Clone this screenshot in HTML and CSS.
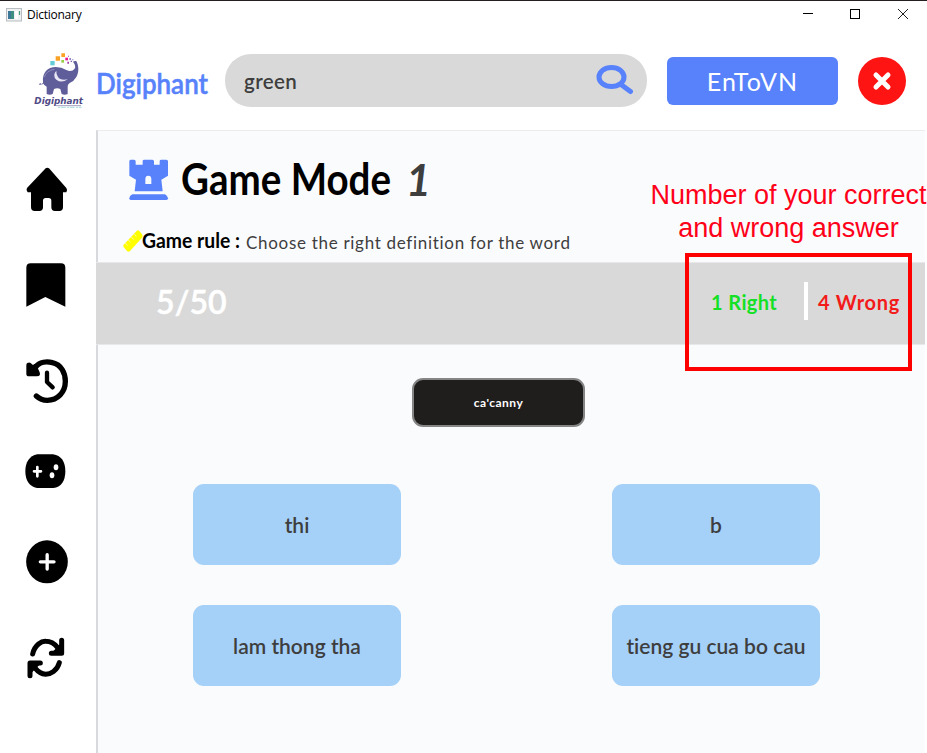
FILE: index.html
```html
<!DOCTYPE html>
<html lang="en">
<head>
<meta charset="utf-8">
<title>Dictionary</title>
<link rel="stylesheet" href="styles.css">
</head>
<body>
<div class="window">
  <div class="titlebar">
    <svg class="app-icon" width="16" height="14" viewBox="0 0 16 14"><rect x=".5" y=".5" width="15" height="12.500" fill="#f0f1f2" stroke="#b9bcc0"/><rect x="2" y="3" width="6" height="8" fill="#3f8f80"/><path d="M2 3h3v8H2z" fill="#3e7898"/><rect x="9" y="3" width="3" height="8" fill="#fff"/><path d="M13.500 3v4" stroke="#4c9c7d" stroke-width="1.200"/></svg>
    <span class="title">Dictionary</span>
    <svg class="controls" width="106" height="12" viewBox="0 0 106 12"><path d="M0 5.500h10" stroke="#000"/><rect x="47.500" y="1.500" width="9" height="9" fill="none" stroke="#000"/><path d="M95 1l10 10M105 1L95 11" stroke="#222" stroke-width="1"/></svg>
  </div>

  <header class="header">
    <svg class="logo" width="52" height="58" viewBox="98 156 156 174">
      <path d="M117 251q4-3 8 3q4-1 3-8C125 218 142 201 166 201q18 0 32 9q16 8 25-4q5-8-5-21q3-3 10-2c8 16 8 34 0 48q-7 13-20 18q-7 4-6 12v21q-9 4-18 0l-4-15q-9-4-19 0l-4 15q-9 4-18 0v-22q-8-5-12-11q-4 6-8 5q-4 2-2-3z" fill="#5f5e9b"/>
      <path d="M168 212q-13 14 0 27q16 12 34-1q-22 4-29-7q-6-10-5-19z" fill="#e9e7f5"/>
      <path d="M132 231q7-20 30-23" fill="none" stroke="#a19fc7" stroke-width="2"/>
      <path d="M150 183h13v13h-13z" fill="#64ccd6"/><path d="M166 169h13v13h-13zM183 160h11v11h-11z" fill="#faa225"/><path d="M183 180h8v8h-8z" fill="#98cd43"/><path d="M195 173h8v8h-8z" fill="#ec168c"/><path d="M201 185h5v6h-5zM203 167h3v3h-3z" fill="#a33da0"/><path d="M207 175h5v4h-5zM211 182h4v4h-4zM216 178h3v3h-3z" fill="#6b5ca5"/>
      <text class="logo-word" x="102" y="311" textLength="146" lengthAdjust="spacingAndGlyphs">Digiphant</text>
      <path d="M166 317h76" stroke="#77709f" stroke-width="2"/><path d="M173 322h71" stroke="#a8dce0" stroke-width="3" stroke-dasharray="7 2 14 4"/>
    </svg>
    <svg class="brand" width="114" height="44"><text class="brand-word" x="0" y="28" textLength="112" lengthAdjust="spacingAndGlyphs">Digiphant</text></svg>
    <div class="search">
      <span class="query">green</span>
      <svg width="38" height="30" viewBox="0 0 38 30"><ellipse cx="15.500" cy="12" rx="12.500" ry="9.600" fill="none" stroke="#5782fb" stroke-width="5"/><path d="M25 19.500l9.500 7" stroke="#5782fb" stroke-width="5" stroke-linecap="round"/></svg>
    </div>
    <div class="lang">EnToVN</div>
    <div class="close"><svg width="18" height="18" viewBox="0 0 18 18"><path d="M3 3l12 12M15 3L3 15" stroke="#fff" stroke-width="5" stroke-linecap="round"/></svg></div>
  </header>

  <div class="body">
    <nav class="sidebar">
      <svg class="home" width="42" height="45" viewBox="78 110 126 135"><path d="M137 114q5-4 10 0l52 59q5 7 0 13h-10v44q0 12-11 12h-13q-11 0-11-11v-20q0-8-8-8h-9q-8 0-8 8v20q0 11-11 11h-14q-11 0-11-12v-44H83q-6-6-2-13z"/></svg>
      <svg class="bookmark" width="40" height="44" viewBox="78 399 120 132"><path d="M79 413q0-13 13-13h91q13 0 13 13v117l-60-29-57 29z"/></svg>
      <svg class="history" width="43" height="45" viewBox="78 685 129 135"><path d="M106 710C119 693 141 692 157 696C184 702 196 727 196 752C196 785 173 809 142 809Q123 809 109 796" fill="none" stroke="#000" stroke-width="16" stroke-linecap="round"/><path d="M82 697q8-5 14 4l3 2q7-7 11 2l9 20q4 12-8 12H87q-8 0-8-8v-26q0-4 3-6z"/><path d="M141 726v28l17 16" fill="none" stroke="#000" stroke-width="13" stroke-linecap="round" stroke-linejoin="round"/></svg>
      <svg class="gamepad" width="41" height="35" viewBox="76 101 123 105"><path d="M113 102h47c25 4 37 22 37 51s-13 49-36 50h-49c-23-4-35-23-35-50s12-46 36-51z"/><path d="M103 153h21M113 140v28" stroke="#fff" stroke-width="8" stroke-linecap="round"/><ellipse cx="169" cy="141" rx="7" ry="9" fill="#fff"/><ellipse cx="157" cy="165" rx="7" ry="9" fill="#fff"/></svg>
      <svg class="plus" width="43" height="44" viewBox="78 359 129 132"><ellipse cx="141" cy="424.500" rx="62.500" ry="64.500"/><path d="M121 424.500h41M141.500 403v43" stroke="#fff" stroke-width="10" stroke-linecap="round"/></svg>
      <svg class="sync" width="38" height="42" viewBox="81 650 114 126"><g fill="none" stroke="#000" stroke-width="15" stroke-linecap="round" stroke-linejoin="round"><path d="M98 701C104 673 126 662 137 663Q158 663 173 682M185 660v39h-31"/><path d="M178 727C172 751 151 762 137 762Q119 760 106 744M90 766v-38h31"/></g><path d="M183 669v30h-30l14-14zM92 760v-30h30l-14 14z"/></svg>
    </nav>
    <main class="main">
      <section class="intro">
        <div class="heading">
          <svg class="rook" width="40" height="42" viewBox="89 56 120 126"><path d="M94 58h10q5 0 5 5v10h21V62q0-4 5-4h24q5 0 5 5v10h17V62q0-4 5-4h15q5 0 5 5v43l-20 12 4 35H106l4-35-20-12V63q0-5 4-5z" fill="#5782fb"/><path d="M138 131v-15q0-10 9-10t9 10v15z" fill="#fafbfd"/><path d="M99 162h98q9 6 9 12 0 5-5 5H94q-4 0-4-5 0-7 9-12z" fill="#5782fb"/></svg>
          <svg class="game-title" width="214" height="56"><text class="title-word" x="0" y="41" textLength="210" lengthAdjust="spacingAndGlyphs">Game Mode</text></svg>
          <span class="mode">1</span>
        </div>
        <div class="rule">
          <svg class="ruler" width="20" height="23" viewBox="68 268 60 69"><path d="M70 312l39-41q4-4 8 0l8 10q4 5 0 10l-36 40q-4 5-9 0l-10-12q-3-4 0-7z" fill="#ff0"/><path d="M75 307l7 8M84 298l6 7M93 289l7 8M102 280l6 7" stroke="#fafbfd" stroke-width="2"/></svg>
          <svg class="rule-label" width="100" height="30"><text class="rule-word" x="0" y="21" textLength="98" lengthAdjust="spacingAndGlyphs">Game rule :</text></svg>
          <span class="rule-text">Choose the right definition for the word</span>
        </div>
      </section>
      <section class="score">
        <span class="progress">5/50</span>
        <span class="right">1 Right</span>
        <span class="divider"></span>
        <span class="wrong">4 Wrong</span>
      </section>
      <section class="quiz">
        <div class="word">ca'canny</div>
        <div class="answers">
          <div class="answer">thi</div>
          <div class="answer">b</div>
          <div class="answer">lam thong tha</div>
          <div class="answer">tieng gu cua bo cau</div>
        </div>
      </section>
    </main>
  </div>
  <div class="note">Number of your correct<br>and wrong answer</div>
  <div class="marker"></div>
</div>
</body>
</html>
```
FILE: styles.css
```css
* { box-sizing: border-box; }
body { margin: 0; background: #fff; font-family: Lato, "Liberation Sans", sans-serif; color: #3e3e3e; font-variant-ligatures: none; }
svg { display: block; flex: none; overflow: visible; }
.window { position: relative; width: 927px; height: 753px; overflow: hidden; display: flex; flex-direction: column; }
.titlebar { height: 28px; flex: none; border-top: 1px solid #231f20; display: flex; align-items: center; padding: 0 18px 0 6px; }
.title { margin-left: 5px; font: 12px "Open Sans", sans-serif; letter-spacing: -.25px; color: #000; }
.controls { margin: -2px 0 0 auto; }
.header { height: 102px; flex: none; display: flex; align-items: flex-start; padding-left: 32.500px; }
.logo { margin-top: 24px; }
.logo-word { font: italic bold 25px "DejaVu Sans", sans-serif; fill: #4e4985; }
.brand { margin: 38px 0 0 11.500px; }
.brand-word { font: 600 28px Lato, sans-serif; fill: #5782fb; stroke: #5782fb; stroke-width: .5px; }
.search { width: 422px; height: 53px; margin: 26px 0 0 15px; border-radius: 26px; background: #d9d9d9; display: flex; align-items: center; padding: 0 13px 2px 19px; justify-content: space-between; }
.query { font-size: 20.500px; font-weight: 600; letter-spacing: .4px; padding-top: 3px; }
.lang { width: 171px; height: 48px; margin: 29px 0 0 20px; border-radius: 6px; background: #5782fb; color: #fff; font-size: 25px; letter-spacing: 1.1px; line-height: 48px; text-align: center; }
.close { width: 48px; height: 48px; margin: 29px 0 0 20px; border-radius: 50%; background: #ff1414; display: flex; align-items: center; justify-content: center; }
.body { flex: 1; display: flex; min-height: 0; }
.sidebar { width: 96px; flex: none; padding-left: 26px; display: flex; flex-direction: column; }
.home { margin-top: 37px; }
.bookmark { margin-top: 51px; }
.history { margin-top: 51.500px; }
.gamepad { margin: 50.500px 0 0 -1px; }
.plus { margin-top: 50.500px; }
.sync { margin: 53px 0 0 1px; }
.main { width: 829px; background: #fafbfd; border-left: 2px solid #d8d9dc; border-top: 1px solid #ececef; }
.intro { height: 131px; padding-top: 21px; }
.heading { display: flex; align-items: flex-start; padding-left: 31px; height: 75px; }
.rook { margin-top: 7px; }
.game-title { margin-left: 12px; margin-top: 2px; }
.mode { font-size: 43px; font-weight: 700; font-style: italic; line-height: 54px; margin: 1px 0 0 11px; }
.rule { display: flex; align-items: flex-start; padding-left: 24.500px; }
.ruler { margin-top: 3px; }
.rule-label { margin: 0 0 0 -.5px; }
.title-word { font: 700 43px Lato, sans-serif; fill: #000; }
.rule-word { font: 700 21px Lato, sans-serif; fill: #000; }
.rule-text { font-size: 17px; line-height: 22px; letter-spacing: .7px; margin: 5px 0 0 4px; white-space: nowrap; }
.score { height: 83px; margin-left: -2px; background: #d9d9d9; border: solid #e8e8ea; border-width: 1px 0; display: flex; align-items: flex-start; padding: 19px 0 0 60px; font-size: 20px; font-weight: 700; letter-spacing: .4px; line-height: 40px; white-space: nowrap; }
.progress { width: 555px; color: #fff; font-size: 32px; font-weight: 600; letter-spacing: .1px; -webkit-text-stroke: .5px #fff; }
.right { width: 93px; color: #14e025; }
.divider { width: 4px; height: 38px; background: #fff; margin-right: 10px; }
.wrong { color: #f31a1a; letter-spacing: .75px; }
.quiz { padding: 33px 105px 0 95px; }
.word { width: 173px; height: 49px; margin: 0 auto 57px 219px; border: 2px solid #858585; border-radius: 11px; background: #201e1d; color: #fff; font-size: 12px; font-weight: 700; letter-spacing: .5px; line-height: 45px; text-align: center; }
.answers { display: grid; grid-template-columns: 208px 208px; grid-auto-rows: 81px; justify-content: space-between; row-gap: 40px; }
.answer { border-radius: 11px; background: #a5d0f8; font-size: 21px; font-weight: 600; line-height: 81px; text-align: center; white-space: nowrap; }
.note { position: absolute; left: 638.500px; top: 179px; width: 300px; text-align: center; font: 27px/32.5px "Liberation Sans", sans-serif; color: #ff0019; white-space: nowrap; }
.marker { position: absolute; left: 685px; top: 253px; width: 227px; height: 118px; border: 4px solid #f00; }
```
